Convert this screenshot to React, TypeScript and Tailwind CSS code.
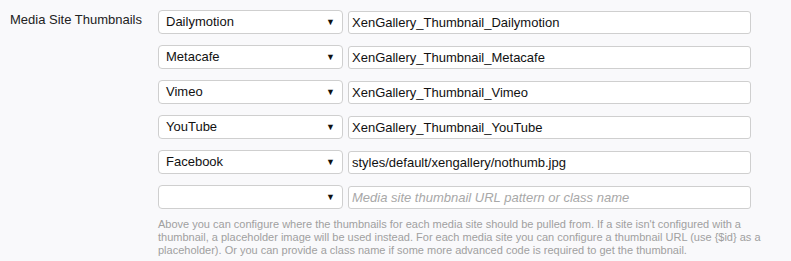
const rows: { site: string; value: string }[] = [
  { site: "Dailymotion", value: "XenGallery_Thumbnail_Dailymotion" },
  { site: "Metacafe", value: "XenGallery_Thumbnail_Metacafe" },
  { site: "Vimeo", value: "XenGallery_Thumbnail_Vimeo" },
  { site: "YouTube", value: "XenGallery_Thumbnail_YouTube" },
  { site: "Facebook", value: "styles/default/xengallery/nothumb.jpg" },
  { site: "", value: "" },
];

function SiteRow({ site, value }: { site: string; value: string }) {
  return (
    <div className="flex h-[24px] items-start gap-[5px]">
      <div className="flex h-[24px] w-[185px] items-center justify-between rounded-[4px] border border-[#cfcfcf] bg-white pl-[7px] pr-[7px] text-[13px] text-[#111]">
        <span>{site}</span>
        <span className="text-[9px] leading-none text-[#111]">▼</span>
      </div>
      <div className="mt-[1px] flex h-[23px] w-[403px] items-center rounded-[3px] border border-[#cfcfcf] bg-white px-[3px] text-[13px]">
        {value ? (
          <span className="text-[#111]">{value}</span>
        ) : (
          <span className="italic text-[#a8a8a8]">
            Media site thumbnail URL pattern or class name
          </span>
        )}
      </div>
    </div>
  );
}

export default function App() {
  return (
    <div className="h-[261px] w-[791px] bg-[#f9f9fb] font-['Liberation_Sans',Arial,sans-serif]">
      <div className="flex pt-[10px]">
        <div className="w-[158px] pl-[10px] pt-[2px] text-[13px] leading-[16px] text-[#222]">
          Media Site Thumbnails
        </div>
        <div className="flex flex-col">
          <div className="flex flex-col gap-[11px]">
            {rows.map((r, i) => (
              <SiteRow key={i} site={r.site} value={r.value} />
            ))}
          </div>
          <p className="mt-[9px] text-[11px] leading-[13px] text-[#a0a0a0]">
            <span className="block">
              Above you can configure where the thumbnails for each media site
              should be pulled from. If a site isn't configured with a
            </span>
            <span className="block">
              thumbnail, a placeholder image will be used instead. For each
              media site you can configure a thumbnail URL (use {"{$id}"} as a
            </span>
            <span className="block">
              placeholder). Or you can provide a class name if some more
              advanced code is required to get the thumbnail.
            </span>
          </p>
        </div>
      </div>
    </div>
  );
}
